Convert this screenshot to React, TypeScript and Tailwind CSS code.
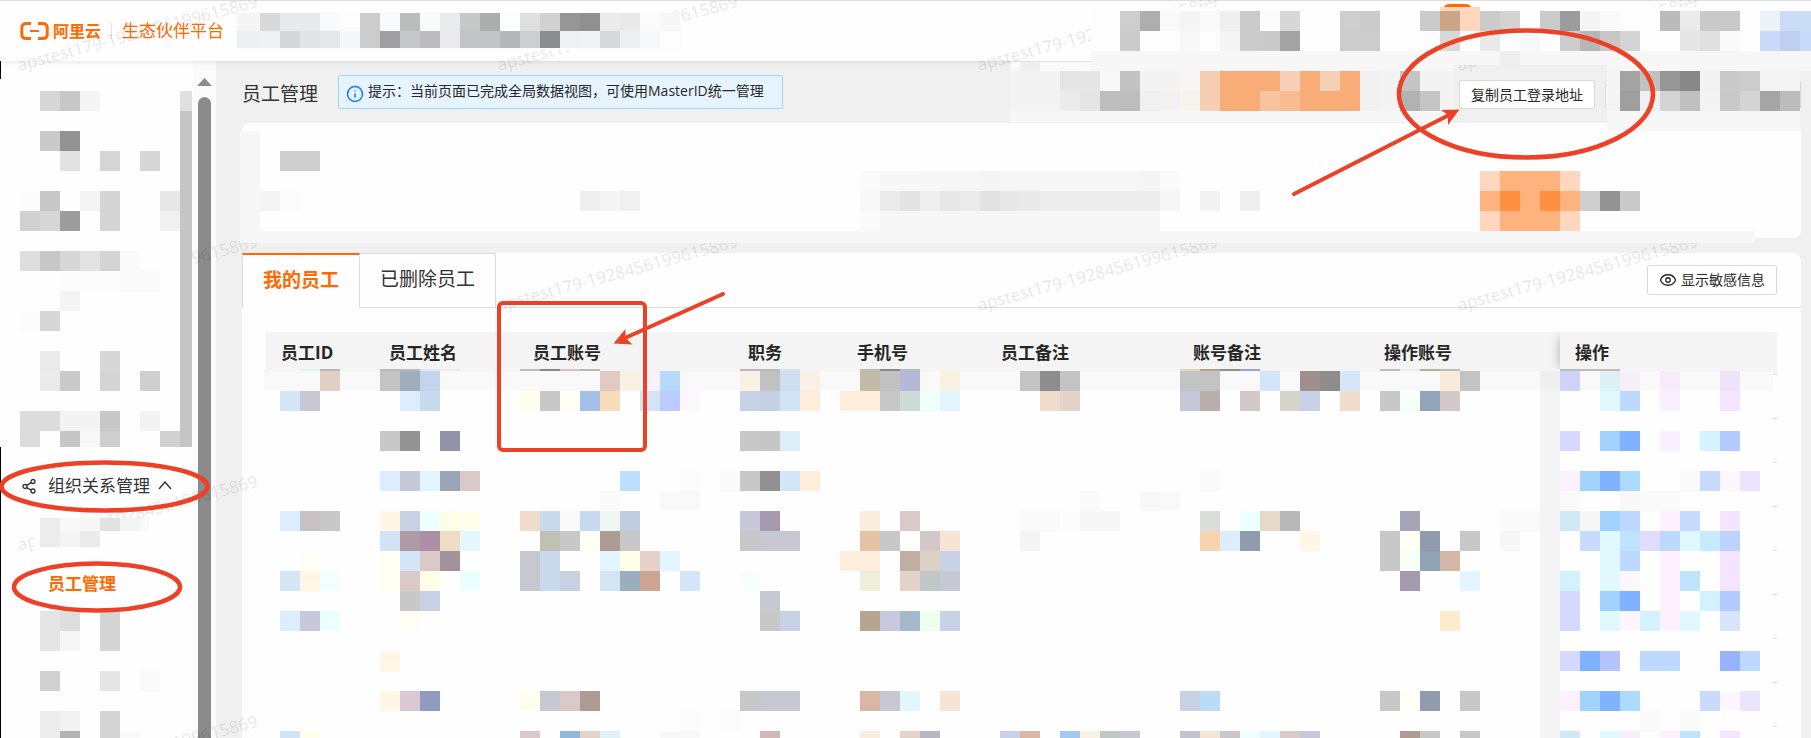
import { Eye, Info } from 'lucide-react';

const CELL = 20;
const ORIGIN_Y = 11;

// Redaction blocks. Each entry is [row, 'col:color,color ...'], colours run to the right from col.
const BLOCKS: [number, string][] = [
  // top bar, right side
  [0, '56:cecece,aeaeae,f9f9f9,f5f5f5,fafafa,efefef,cbcbcb,fcfcfc,d7d7d7 67:cecece,cbcbcb 71:cbcbcb,cba586,fed6bd,cbcbcb,d3d3d3 77:cbcbcb,9c9c9c,f5f5f5,fafafa 83:bbbbbb,ebebeb,c9c9c9,c9c9c9 88:ecf2f8,cbdcf7,cbdcf7'],
  [1, '56:cbcbcb 59:f8f8f8 61:f5f5f5,cbcbcb,cacaca,a3a3a3 67:cccccc,cccccc 72:d8d8d8 74:e9e9e9 76:f8f8f8 78:cccccc,b6b6b6,c8c8c8,d4d4d4 84:e6e6e6,dfdfdf,fafafa 88:c9dafa,c1d0f0,c9dafa'],
  [3, '53:e5e5e5,e6e6e6,f8f8f8,c2c2c2,f3f3f3,f3f3f3,f8f6f5,f6cfb3,f8ad78,f8ad78,f8ad78,f6d0b8,f8ad78,f6d0b4,f8ad78,f1f1f1,f3f3f3,c4c4c4 81:a3a3a3,c1c1c1,969696,888888,f2f2f2,cacaca,cccccc'],
  [4, '53:ebebeb,e5e5e5,bebebe,bdbdbd,f0f0f0,f2f2f2,f7f3ef,f6cfb3,f8ad78,f8ad78,f8c4a0,f8bc91,f8ad78,f8ad78,f8ad78,f1f1f1,f3f3f3,b2b2b2,c5c5c5 81:9f9f9f,f0f0f0,d4d4d4,c0c0c0,f3f3f3,c9c9c9,d4d4d4,a5a5a5,bcbcbc'],
  // filter card
  [7, '14:cfcfcf,cfcfcf'],
  [8, '43:fafafa,f7f7f7,f7f7f7,f6f6f6,f6f6f6,f6f6f6,f5f5f5,f6f6f6,f6f6f6,f6f6f6,f6f6f6,f6f6f6,f6f6f6,f6f6f6,f5f5f5,fafafa 74:fed7be,feb37e,feb37e,feb37e,fed7be'],
  [9, '13:f4f4f4,fbfbfb 29:eeeeee,f5f5f5,f0f0f0 43:f8f8f8,eaeaea,e4e4e4,efefef,e8e8e8,ebebeb,e2e2e2,e8e8e8,e9e9e9,ededed,ededed,ededed,ededed,ededed,ededed,f6f6f6 60:f3f3f3 62:eeeeee 74:feb37e,ff8f41,feb37e,ff8f41,feb37e,cecece,939393,cacaca'],
  [10, '43:fafafa,f7f7f7,f7f7f7,f7f7f7,f7f7f7,f7f7f7,f7f7f7,f7f7f7,f7f7f7,f7f7f7,f7f7f7,f7f7f7,f7f7f7,f7f7f7,f7f7f7 74:fed7be,feb37e,feb37e,feb37e,fed7be'],
  // side menu
  [4, '2:d6d6d6,c7c7c7,f5f5f5'],
  [6, '2:cacaca,939393'],
  [7, '3:e2e2e2 5:d6d6d6 7:d7d7d7'],
  [9, '1:fcfcfc,c7c7c7 4:f4f4f4,d5d5d5 8:e8e8e8'],
  [10, '1:d1d1d1,d6d6d6,9d9d9d 5:d5d5d5 8:f0f0f0'],
  [12, '1:dedede,c7c7c7,d7d7d7,e3e3e3,d4d4d4,fafafa'],
  [13, '3:fcfcfc,fcfcfc,fcfcfc,f9f9f9,f9f9f9'],
  [14, '3:f4f4f4'],
  [15, '1:fcfcfc,d7d7d7'],
  [17, '2:eaeaea 5:d7d7d7'],
  [18, '2:ebebeb,cacaca 5:d5d5d5 7:cfcfcf'],
  [20, '1:dcdcdc,dcdcdc,f3f3f3,f3f3f3,c8c8c8 7:f3f3f3'],
  [30, '2:e5e5e5,dedede 5:d5d5d5'],
  [31, '2:e5e5e5,f6f6f6 5:d5d5d5'],
  [33, '2:d1d1d1 5:e5e5e5 7:f9f9f9'],
  [35, '2:ececec,f2f2f2 5:d5d5d5'],
  [36, '2:ececec,b3b3b3 5:d5d5d5,f9f9f9'],
  // table body
  [18, '16:e1cfc5 19:c3c3c3,9faebd,c3d5ea 30:e0cac2,f9f1e3,f8f1f9,b6d8fa 37:f9f1e3,c1c1c1,cfdff1,f9f1e3 43:c3baa8,c2c2c2,b5b9d9 47:f9f1e1 51:c3c3c3,8d8d8d,c3c3c3 59:c3c3c3,c3c3c3 63:d3e6f8 65:a08e8e,8d8d8d,d5e7f8 72:f9ead9,c3c3c3 77:efefef,d0d3f9 80:dbf1f7,f7f0f8 83:f7ebf9 86:efe3f7'],
  [19, '14:d3e5f7,c8c8d5 20:dbedff,c8dbee 26:fdfeec,c8c8c8,fffef5,a5bfe6,f6dcb8 32:d2e4f6,bdcaff,fdf6ff 37:c7d2e6,c5d0e4,d1e4f6,ffeddc 42:ffeddc,ffeddc,c8c8c8,cddcda,effff9,e3f6ff 52:efddca,e5d2c8 59:c7c7da,baaead 62:d3c8c8 64:d6d4c9,c8d1e7 67:efdcca 69:c8c8c8,f5fff8,91a4b9,d2c8c8 80:e0f8ff,bdd9ff 83:faf0ff 86:f4e4ff'],
  [21, '19:c8c8c8,939393 22:9392a9 37:c8c8c8,c6c6c6,dceef8 78:d5d8ff 80:a2d3ff,80b3ff 83:fbf0ff 85:d5f2ff,b3caff'],
  [23, '19:dbedff,c8c8db,e3f6ff,9ca4b8,dbc8c8 31:bddfff 34:fbfbfb 36:fafafa,c8c8c8,919191,d3e5f8,ffeddc 60:fafafa 78:fdf0ff,a2d3ff,80b3ff,addaff 84:fafafa,c9daff,fdf6ff,eae4ff'],
  [24, '30:fafafa 33:f9f9f9,f9f9f9 54:fafafa 57:f8f8f8,f9f9f9 78:fafafa 81:f8f8f8,fafafa,fafafa'],
  [25, '14:dbedff,c8c1c3,c8c8c8 19:fff6e6,c8d1e4,eeffff,fefde6,fdfeec 26:efdcca,c8daeb,f9faf9,c6d9f0,eff7f5,c1cce0 37:c8c8db,a59bae 43:f9eedd 45:dbc8c9 51:fafafa,fafafa,fcfcfc,f7f7f7,f7f7f7 60:d9dcd9 62:edffff,e7d9c7,b9b9b9 70:a4a5b8 75:fafafa,fafafa 78:cfeaf6,f7f7f7,a2d3ff,bdd9ff 83:fdf0ff,c9daff 86:f4e4ff'],
  [26, '19:d1e4f6,ae9ba4,ae8fa7,efdcc5,e5f7ff 27:c1c1b3,c8c8c8,fffef5,ae9b91,c8c8c8 37:c8c8c8,c8c8d3,c8c8d3 43:e5c1a5,c8c8c8 46:d2c8c8,f6e5d4 51:f5f5f5 60:f7d4af,dbedff,919bae 65:fff6e5 69:c8c8c8,fffef5,919bae 73:c8c8c8 75:f7f7f7 79:c9daff,e0f8ff,bde3ff,e0dcff,bdd9ff,e0f8ff,c6ebff,bdd3ff'],
  [27, '15:fffef5 19:fffef5,d3e5f9,dbc8c8,a4919b 26:c8c8d3,c8daeb 30:e3f6ff,fffee7,e5d1c9,e3f6ff 42:ffeddc,ffeddc 45:c1aea3,ddd0c7,c8d2e6 69:c8c8c8,f5fff8,91a4b7,d3b6a5 80:e0f8ff,bdd9ff 83:fdf0ff 86:f4e4ff'],
  [28, '14:d3e5f7,fff6e5,f3ffff 19:fffef5,dbc8c8,fefde6 23:ecffff 26:c8c8d3,c8daeb,c8d1e4 30:d2e4f6,9baec0,cca591 34:d3e5f9 37:f5fffe 43:eeeedb 45:e5d2c8,c0c8c6,c8c8d3 70:a59bae 73:e3f6ff 78:d3f1ff 80:e0f8ff,fdf6ff 83:fdf0ff,bde3ff 86:f4e4ff'],
  [29, '20:c8c8c8,c8d1e4 38:c8c8d3 78:d5d8ff 80:a2d3ff,80b3ff 83:fdf0ff 85:d3f1ff,b3caff'],
  [30, '14:dbedff,c8c8db,ecffff 20:fffef5 38:c8c8c8,c8d2e6 43:b8a58f,c8c8de,a5b7ca,eeffee,c8d2e6 72:ffeccd 78:d5d8ff 80:e0f8ff,fdf6ff,d3f1ff,fdf0ff,e0f8ff 86:d7e4ff'],
  [32, '19:fff6e5 78:d5d8ff,80b3ff,b6c3ff 82:bdd9ff,bdd9ff 86:97b3ff,bdd9ff'],
  [34, '19:fff6e5,dbc8d5,919bc1 26:fdfeec,c8c8d3,dbc8c8,ae9b91 37:c8c8c8,c8c8d3,c8c8d3 43:dbb6a5,c8c8d3,e3f6ff 47:f6e5d4 59:c8d2e6,b9dcf8 69:c8c8c8,fffef5,919bae 73:c8c8c8 78:fdf0ff,a2d3ff,80b3ff,addaff 85:c9daff,fdf6ff,eae4ff'],
  [35, '34:fbfbfb 36:fbfbfb 82:fafafa 84:fafafa'],
  [36, '14:d1e4f6,fdfeec 26:dbc8c8 28:91b9de,e5d2c8,dff2fa 33:f8f8f8,f8f8f8 38:d3b6b6 43:f9eedd 45:e5d2c8,b8b6c0 50:c8d2e6,dbb6a5 53:a2c9f0,f9f1e3,c0c8c6,c8c8d3 59:c3c3d0,f6e5d4,c8c8c8,edffff,e3f6ff,dbc8c8,c8c8db 70:b09b91,c8c8c8 73:c8c8c8 78:cfeaf6 80:e0f8ff,f9eefb 83:fdf0ff,bde3ff 86:f4e4ff'],
];

// Areas wiped before the blocks are painted, and blocks cut by an area's edge: x, y, w, h, colour
const PATCHES: [number, number, number, number, string][] = [
  [237, 13, 445, 37, '#fdfdfd'],
  [1091, 7, 720, 44, '#fdfdfd'],
  [1010, 62, 81, 9, '#fafafa'],
  [1020, 62, 20, 9, '#efefef'],
  [1091, 51, 363, 20, '#f7f7f7'],
  [1454, 51, 357, 14, '#f7f7f7'],
  [1607, 65, 204, 6, '#f7f7f7'],
  [1500, 51, 20, 14, '#eeeeee'],
  [1010, 71, 444, 51, '#f3f3f3'],
  [1607, 71, 193, 60, '#f4f4f4'],
  [1010, 111, 444, 11, '#f7f7f7'],
  [1607, 111, 193, 20, '#f7f7f7'],
  [1440, 7, 20, 4, '#fed6bd'],
  [1460, 7, 20, 4, '#fed6bd'],
  [260, 131, 1495, 100, '#fefefe'],
  [240, 131, 20, 112, '#f7f7f7'],
  [260, 231, 1495, 12, '#f7f7f7'],
  [0, 79, 192, 368, '#fefefe'],
  [180, 91, 12, 20, '#e0e0e0'],
  [180, 111, 12, 336, '#c5c5c5'],
  [20, 431, 20, 16, '#dbdbdb'],
  [60, 431, 20, 16, '#c6c6c6'],
  [80, 431, 20, 16, '#f8f8f8'],
  [100, 431, 20, 16, '#cfcfcf'],
  [160, 431, 20, 16, '#d1d1d1'],
  [34, 518, 115, 29, '#fefefe'],
  [40, 518, 20, 29, '#ececec'],
  [60, 518, 20, 13, '#f8f8f8'],
  [80, 518, 20, 13, '#f7f7f7'],
  [100, 518, 20, 13, '#e2e2e2'],
  [120, 518, 20, 13, '#f4f4f4'],
  [140, 518, 9, 13, '#f9f9f9'],
  [60, 531, 20, 16, '#f5f5f5'],
  [80, 531, 20, 16, '#ebebeb'],
  [264, 369, 1509, 400, '#fefefe'],
  [264, 369, 1509, 2, '#f4f4f4'],
  [264, 371, 1509, 20, '#f9f9f9'],
  [1540, 391, 20, 350, '#f4f4f4'],
];

// Slivers where a redacted area starts two pixels above its first full row
const SLIVERS = '15:dff3f3,b9b9b9 19:b9b9b9,b9b9b9,e2e6f2,eee8e6 26:bbbbbb,888888,d8c4bf,b9b9b9 37:b9b9b9,b9b9b9,dbe3ee 43:bcbcbc,888888,bcbcbc 59:e0d6c0,b6a58e,8f8f8f,98a4cc 69:bcbcbc,e2efe2,aab4a0,bcbcbc 78:bcbcbc,bcbcbc,ccb8b8';

const TOP_ROW = 'f5f5f5 d9d9d9 e8e9ea e8e9ea f8fafc fdfdfd cccccc f7f9fb bbbdbc f8fafc e9eaeb c7c9c8 abaead fcfdfe dfdfdf d1d1d1 969696 909090 ebebeb e9e9e9 fbfbfb f7f7f7'.split(' ');
const SECOND_ROW = 'edf0f3 f0f1f4 d6d7da e3e4e6 e6e7e9 f5f6f7 cccccd a0a0a2 c6c7c9 bcbcbf eaeaec c2c3c5 c2c3c4 b6b7ba cdced1 8c8d8f eff0f3 f1f2f4 d6d8db edeef0 f6f8fc'.split(' ');

const COLUMNS = [
  { title: '员工ID', width: 108 },
  { title: '员工姓名', width: 144 },
  { title: '员工账号', width: 215 },
  { title: '职务', width: 109 },
  { title: '手机号', width: 144 },
  { title: '员工备注', width: 192 },
  { title: '账号备注', width: 191 },
  { title: '操作账号', width: 191 },
  { title: '操作', width: 217 },
];

function parseRuns(runs: string) {
  return runs.split(' ').flatMap((run) => {
    const [col, colors] = run.split(':');
    return colors.split(',').map((color, i) => ({ col: Number(col) + i, fill: `#${color}` }));
  });
}

function Watermarks() {
  const marks = [];
  for (let y = 71; y < 900; y += 240) {
    for (let x = 19; x < 1800; x += 480) marks.push({ x, y });
  }
  return (
    <svg aria-hidden="true" className="pointer-events-none absolute inset-0 size-full">
      {marks.map(({ x, y }) => (
        <text
          key={`${x}-${y}`}
          x={x}
          y={y}
          transform={`rotate(-15 ${x} ${y})`}
          className="fill-black/10 font-['Noto_Sans'] text-[17px]"
        >
          apstest179-1928456199615869
        </text>
      ))}
    </svg>
  );
}

function Mosaic() {
  return (
    <svg aria-hidden="true" shapeRendering="crispEdges" className="pointer-events-none absolute inset-0 size-full">
      <rect x="1443" y="4" width="29" height="12" rx="6" fill="#ff6a00" shapeRendering="auto" />
      {PATCHES.map(([x, y, w, h, fill], i) => (
        <rect key={i} x={x} y={y} width={w} height={h} fill={fill} />
      ))}
      {TOP_ROW.map((c, i) => (
        <rect key={i} x={i ? 240 + i * CELL : 237} y={13} width={i ? CELL : 23} height={18} fill={`#${c}`} />
      ))}
      {SECOND_ROW.map((c, i) => (
        <rect key={i} x={i ? 240 + i * CELL : 237} y={31} width={i ? CELL : 23} height={17} fill={`#${c}`} />
      ))}
      {BLOCKS.map(([row, runs], i) => (
        <g key={i}>
          {parseRuns(runs).map(({ col, fill }) => (
            <rect key={col} x={col * CELL} y={ORIGIN_Y + row * CELL} width={CELL} height={CELL} fill={fill} />
          ))}
        </g>
      ))}
      {parseRuns(SLIVERS).map(({ col, fill }) => (
        <rect key={col} x={col * CELL} y={369} width={CELL} height={2} fill={fill} />
      ))}
    </svg>
  );
}

function Annotations() {
  return (
    <svg
      aria-hidden="true"
      fill="none"
      stroke="#ed4127"
      strokeWidth="4.6"
      className="pointer-events-none absolute inset-0 size-full"
    >
      <ellipse cx="1526" cy="94" rx="127" ry="63.5" />
      <ellipse cx="104.5" cy="486.5" rx="103" ry="24" />
      <ellipse cx="97" cy="587" rx="83" ry="23.5" />
      <rect x="499" y="303" width="146" height="147" rx="4" strokeWidth="4" />
      <g strokeWidth="4" strokeLinecap="round">
        <path d="M1294 194 1449 115" />
        <path d="M723 294 625 338" />
      </g>
      <g fill="#ed4127" stroke="none">
        <path d="M1459.5 109.5 1441 110 1448 115 1448 125z" />
        <path d="M613.5 343.5 625.5 329 625.5 338 632.5 344.5z" />
      </g>
    </svg>
  );
}

function Logo() {
  return (
    <svg viewBox="0 0 29 18" fill="none" stroke="#ff6a00" className="h-[18px] w-[29px]" aria-hidden="true">
      <path d="M11 1.5H6.500C3.500 1.500 1.800 3 1.800 5.500v7c0 2.500 1.700 4 4.700 4H11" strokeWidth="3" />
      <path d="M18 1.500h4.500c3 0 4.700 1.500 4.700 4v7c0 2.500-1.700 4-4.700 4H18" strokeWidth="3" />
      <path d="M10 9h9" strokeWidth="2" />
    </svg>
  );
}

function ShareIcon() {
  return (
    <svg viewBox="0 0 16 16" fill="none" stroke="#333" strokeWidth="1.3" className="size-4" aria-hidden="true">
      <circle cx="4" cy="8.500" r="2" />
      <circle cx="12" cy="3.500" r="2" />
      <circle cx="12" cy="13" r="2" />
      <path d="M5.800 7.400 10.200 4.600M5.800 9.600l4.400 2.500" />
    </svg>
  );
}

function TopBar() {
  return (
    <header className="relative z-10 flex h-[61px] items-center border-t border-[#dedede] bg-[#fefefe] pl-5 text-[#ff6a00] shadow-[0_1px_6px_rgba(0,0,0,0.1)]">
      <Logo />
      <span className="ml-1 text-[16px] font-bold">阿里云</span>
      <span className="mx-[10px] h-4 w-px bg-[#e3e3e3]" />
      <span className="text-[17px]">生态伙伴平台</span>
    </header>
  );
}

function SideMenu() {
  return (
    <aside className="flex w-[216px] shrink-0 border-l border-black bg-[#fefefe]">
      <nav className="flex-1 pt-2 text-[17px]">
        <div className="h-[392px]" />
        <button type="button" className="flex h-[49px] w-full items-center pl-5 text-[#333]">
          <ShareIcon />
          <span className="ml-[11px]">组织关系管理</span>
          <svg viewBox="0 0 14 9" fill="none" stroke="#333" strokeWidth="1.4" className="ml-2 h-[9px] w-[14px]" aria-hidden="true">
            <path d="M1 8 7 1l6 7" />
          </svg>
        </button>
        <div className="h-[49px]" />
        <a href="#staff" className="flex h-[49px] items-center pl-[47px] font-bold text-[#ff6a00]">
          员工管理
        </a>
      </nav>
      <div className="flex w-[23px] flex-col items-center bg-[#fbfbfb] pt-[17px]">
        <svg viewBox="0 0 15 8" className="h-2 w-[15px]" aria-hidden="true">
          <path d="M7.500 0 15 8H0z" fill="#8b8b8b" />
        </svg>
        <div className="mt-[11px] w-[13px] flex-1 rounded-t-full bg-[#8b8b8b]" />
      </div>
    </aside>
  );
}

function TitleRow() {
  return (
    <div className="flex h-[62px] items-center pt-1">
      <h1 className="text-[19px] text-[#333]">员工管理</h1>
      <p className="-mt-1 ml-5 flex h-[34px] items-center rounded-[2px] border border-[#9fd4ff] bg-[#e6f4ff] pr-[18px] pl-[7px] text-[14px] text-[#262626]">
        <Info size={18} strokeWidth={2} className="mt-1 mr-1 text-[#1677ff]" />
        <span className="-mt-1">提示：当前页面已完成全局数据视图，可使用MasterID统一管理</span>
      </p>
      <button
        type="button"
        className="ml-auto h-[29px] rounded-[2px] border border-[#d9d9d9] bg-white px-[11px] text-[14px] text-[#262626]"
      >
        复制员工登录地址
      </button>
      <span className="ml-[10px] h-[29px] w-[196px] rounded-[2px] border border-[#d9d9d9] bg-white" />
    </div>
  );
}

function StaffTable() {
  return (
    <table className="w-full table-fixed border-collapse">
      <colgroup>
        {COLUMNS.map((c) => (
          <col key={c.title} style={{ width: c.width }} />
        ))}
      </colgroup>
      <thead>
        <tr className="h-[42px] border-b border-[#dcdcdc] bg-[#f4f4f4]">
          {COLUMNS.map((c) => (
            <th
              key={c.title}
              scope="col"
              className="pl-[15px] text-left text-[17px] leading-6 font-bold text-[#262626] last:shadow-[-8px_0_8px_-6px_rgba(0,0,0,0.2)]"
            >
              {c.title}
            </th>
          ))}
        </tr>
      </thead>
      <tbody>
        {Array.from({ length: 9 }, (_, row) => (
          <tr key={row} className="h-11 border-b border-[#dcdcdc]">
            {COLUMNS.map((c) => (
              <td key={c.title} />
            ))}
          </tr>
        ))}
      </tbody>
    </table>
  );
}

function StaffCard() {
  return (
    <section className="mt-[15px] h-[600px] rounded-tr-lg bg-[#fefefe]">
      <div className="flex h-[55px] border-b border-[#dcdcdc]">
        <button
          type="button"
          className="-mb-px border-t-2 border-r border-l border-t-[#ff6a00] border-r-[#dcdcdc] border-l-[#dcdcdc] bg-[#fefefe] px-5 pb-[2px] text-[19px] font-bold text-[#ff6a00]"
        >
          我的员工
        </button>
        <button type="button" className="border-t border-r border-[#dcdcdc] px-5 pb-[2px] text-[19px] text-[#333]">
          已删除员工
        </button>
        <button
          type="button"
          className="mt-3 mr-6 ml-auto flex h-[30px] items-center rounded-[2px] border border-[#d9d9d9] bg-white px-[11px] pb-[2px] text-[14px] text-[#262626]"
        >
          <Eye size={18} strokeWidth={1.75} className="mt-[2px] mr-1" />
          显示敏感信息
        </button>
      </div>
      <div className="px-6 pt-6">
        <StaffTable />
      </div>
    </section>
  );
}

export default function App() {
  return (
    <div className="relative flex h-screen flex-col overflow-hidden bg-[#f0f0f0] font-['Open_Sans','Noto_Sans_CJK_SC',sans-serif]">
      <TopBar />
      <div className="flex min-h-0 flex-1">
        <SideMenu />
        <main className="min-w-0 flex-1 overflow-hidden pr-[10px] pl-[26px]">
          <TitleRow />
          <section className="h-[115px] rounded-lg bg-[#fefefe]" />
          <StaffCard />
        </main>
      </div>
      <div className="pointer-events-none absolute inset-0 z-20">
        <Watermarks />
        <Mosaic />
        <Annotations />
      </div>
    </div>
  );
}
